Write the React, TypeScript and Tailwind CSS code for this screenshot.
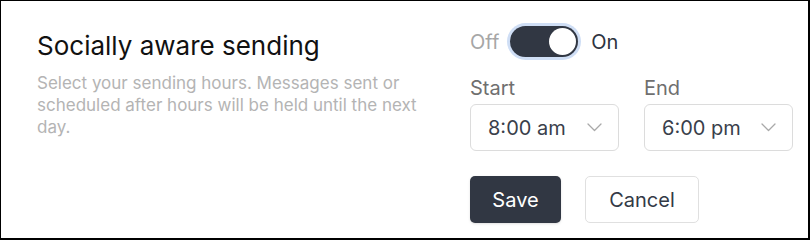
import React, { useState } from 'react';

const Chevron: React.FC = () => (
  <svg width="15" height="9" viewBox="0 0 15 9" fill="none">
    <polyline points="1,1 7.5,7.5 14,1" stroke="#a9a9a9" strokeWidth="1.3" strokeLinecap="round" strokeLinejoin="round" />
  </svg>
);

const TimeSelect: React.FC<{ label: string; value: string }> = ({ label, value }) => (
  <div className="flex flex-col w-[149px]">
    <span className="text-[20px] leading-[24px] text-[#6f6f6f]">{label}</span>
    <button className="mt-[4px] h-[47px] flex items-center justify-between pl-[17px] pr-[16px] border border-[#dcdcdc] rounded-[6px] bg-white">
      <span className="text-[20px] text-[#3a3f4b]">{value}</span>
      <Chevron />
    </button>
  </div>
);

const App: React.FC = () => {
  const [enabled, setEnabled] = useState(true);

  return (
    <div className="w-[810px] h-[240px] bg-white border-t border-l border-r-2 border-b-2 border-black font-['Inter',sans-serif]">
      <div className="flex pl-[36px]">
        {/* Texte explicatif */}
        <div className="w-[433px] shrink-0 pt-[29px]">
          <h2 className="text-[26px] leading-[32px] text-[#111111]">Socially aware sending</h2>
          <p className="mt-[10px] w-[400px] text-[17px] leading-[22px] text-[#b4b4b4]">
            Select your sending hours. Messages sent or scheduled after hours will be held until the next day.
          </p>
        </div>

        {/* Réglages */}
        <div className="flex flex-col shrink-0 pt-[25px]">
          <div className="flex items-center h-[31px]">
            <span className="text-[20px] text-[#a6a6a6]">Off</span>
            <button
              onClick={() => setEnabled(!enabled)}
              className="relative ml-[11px] w-[68px] h-[31px] rounded-full bg-[#313743] ring-[3px] ring-[#cfdef5]"
            >
              <span className="absolute right-[2px] top-[2px] w-[27px] h-[27px] rounded-full bg-white" />
            </button>
            <span className="ml-[13px] text-[20px] text-[#2d3340]">On</span>
          </div>

          <div className="flex gap-[25px] mt-[19px]">
            <TimeSelect label="Start" value="8:00 am" />
            <TimeSelect label="End" value="6:00 pm" />
          </div>

          <div className="flex gap-[24px] mt-[25px]">
            <button className="w-[91px] h-[47px] rounded-[5px] bg-[#313743] text-white text-[20px] shadow-sm">
              Save
            </button>
            <button className="w-[114px] h-[47px] rounded-[5px] border border-[#e0e0e0] bg-white text-[#333a46] text-[20px]">
              Cancel
            </button>
          </div>
        </div>
      </div>
    </div>
  );
};

export default App;
